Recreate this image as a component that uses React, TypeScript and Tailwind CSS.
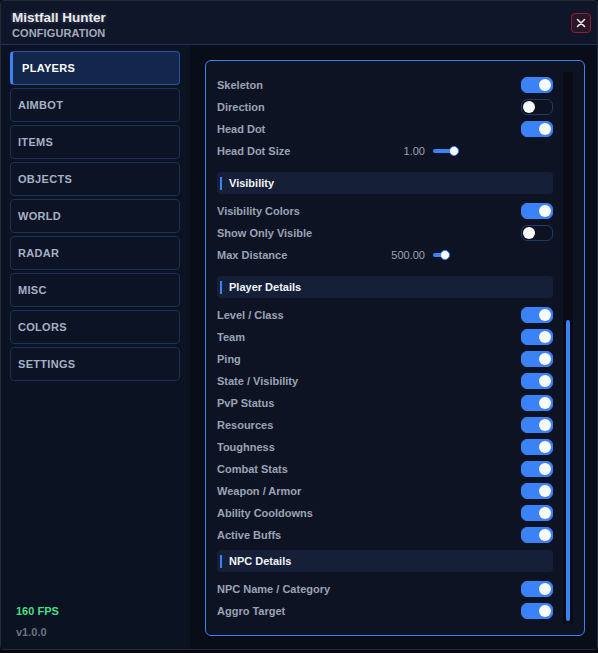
import { useLayoutEffect, useRef, useState } from "react";
import type { ReactNode } from "react";

type Row =
  | { kind: "toggle"; label: string; on: boolean }
  | { kind: "slider"; label: string; value: number; min: number; max: number };

type Section = { title: string; rows: Row[] };

const t = (label: string, on = true): Row => ({ kind: "toggle", label, on });
const s = (label: string, value: number, min: number, max: number): Row => ({ kind: "slider", label, value, min, max });

const tabs = ["PLAYERS", "AIMBOT", "ITEMS", "OBJECTS", "WORLD", "RADAR", "MISC", "COLORS", "SETTINGS"];

const sections: Section[] = [
  {
    title: "ESP",
    rows: [
      t("Enabled"), t("Box"), t("Corner Box", false), t("Filled Box", false), t("Name"),
      t("Distance"), t("Health Bar"), t("Health Text", false), t("Weapon"),
      s("Box Thickness", 1.5, 1, 5),
    ],
  },
  {
    title: "Overlay",
    rows: [
      t("Snaplines", false), t("Snaplines From Top", false), t("Off-Screen Arrows"), t("Glow", false), t("Outline"),
      s("Arrow Size", 12, 4, 32),
      t("Chams", false), t("Skeleton"), t("Direction", false), t("Head Dot"),
      s("Head Dot Size", 1, 0.5, 4),
    ],
  },
  {
    title: "Visibility",
    rows: [t("Visibility Colors"), t("Show Only Visible", false), s("Max Distance", 500, 0, 8000)],
  },
  {
    title: "Player Details",
    rows: [
      t("Level / Class"), t("Team"), t("Ping"), t("State / Visibility"), t("PvP Status"), t("Resources"),
      t("Toughness"), t("Combat Stats"), t("Weapon / Armor"), t("Ability Cooldowns"), t("Active Buffs"),
    ],
  },
  { title: "NPC Details", rows: [t("NPC Name / Category"), t("Aggro Target")] },
];

function Toggle({ initial }: { initial: boolean }) {
  const [on, setOn] = useState(initial);
  return (
    <button
      onClick={() => setOn(!on)}
      className={
        "flex h-[16px] w-[32px] items-center rounded-[6px] border px-px " +
        (on ? "justify-end border-[#3b82f6] bg-[#3b82f6]" : "justify-start border-[#1f3b6b] bg-[#0c1221]")
      }
    >
      <span className="block h-[12px] w-[12px] rounded-full bg-[#f8fafc]" />
    </button>
  );
}

function Slider({ value, min, max }: { value: number; min: number; max: number }) {
  const pct = (value - min) / (max - min);
  const knob = 5 + pct * 110;
  return (
    <div className="relative h-[4px] w-[120px]">
      <div className="absolute left-0 top-0 h-[4px] rounded-full bg-[#3b82f6]" style={{ width: knob }} />
      <div
        className="absolute top-[-3px] h-[10px] w-[10px] rounded-full border border-[#3b82f6] bg-white"
        style={{ left: knob - 5 }}
      />
    </div>
  );
}

function SettingRow({ row }: { row: Row }) {
  if (row.kind === "toggle") {
    return (
      <div className="flex h-[22px] items-center justify-between">
        <span className="text-[11px] font-bold text-[#9aa3b5]">{row.label}</span>
        <Toggle initial={row.on} />
      </div>
    );
  }
  return (
    <div className="mb-[6px] flex h-[22px] items-center">
      <span className="flex-1 text-[11px] font-bold text-[#9aa3b5]">{row.label}</span>
      <span className="mr-[8px] text-[11px] text-[#9ca3af]">{row.value.toFixed(2)}</span>
      <Slider value={row.value} min={row.min} max={row.max} />
    </div>
  );
}

function ScrollArea({ children }: { children: ReactNode }) {
  const ref = useRef<HTMLDivElement>(null);
  const [thumb, setThumb] = useState({ top: 0, size: 1 });

  const sync = () => {
    const el = ref.current;
    if (!el) return;
    setThumb({ top: el.scrollTop / el.scrollHeight, size: el.clientHeight / el.scrollHeight });
  };

  useLayoutEffect(() => {
    const el = ref.current;
    if (el) el.scrollTop = el.scrollHeight;
    sync();
  }, []);

  return (
    <div className="flex h-full min-h-0">
      <div
        ref={ref}
        onScroll={sync}
        className="min-w-0 flex-1 overflow-y-auto pr-[10px] [scrollbar-width:none] [&::-webkit-scrollbar]:hidden"
      >
        {children}
      </div>
      <div className="w-[10px] bg-[#090c14] p-[3px]">
        <div className="relative h-full">
          <div
            className="absolute inset-x-0 rounded-full bg-[#3b82f6]"
            style={{ top: `${thumb.top * 100}%`, height: `${thumb.size * 100}%` }}
          />
        </div>
      </div>
    </div>
  );
}

export default function App() {
  const [tab, setTab] = useState("PLAYERS");

  return (
    <div className="h-[653px] w-[598px] bg-[#06080e] font-['Liberation_Sans',Arial,sans-serif]">
      <div className="flex h-[650px] flex-col overflow-hidden rounded-[4px] border border-[#242b38] bg-[#0b101d]">
        {/* title bar */}
        <div className="flex h-[44px] shrink-0 items-center justify-between border-b border-[#1c3461] bg-[#10162a] pl-[11px] pr-[6px]">
          <div className="mt-[4px] flex flex-col">
            <span className="text-[13.5px] font-bold leading-[16px] text-[#e8eaf0] [text-shadow:0_0_4px_rgba(255,255,255,0.25)]">
              Mistfall Hunter
            </span>
            <span className="text-[11px] font-bold leading-[14px] tracking-[0.1px] text-[#a3abb9]">
              CONFIGURATION
            </span>
          </div>
          <button className="flex h-[20px] w-[20px] items-center justify-center rounded-[4px] border border-[#8b2232] bg-[#2a1627]">
            <svg width="10" height="10" viewBox="0 0 10 10" fill="none" stroke="#f1f1f1" strokeWidth="1.6" strokeLinecap="round">
              <path d="M1.5 1.5l7 7M8.5 1.5l-7 7" />
            </svg>
          </button>
        </div>

        <div className="flex min-h-0 flex-1">
          {/* sidebar */}
          <div className="flex w-[189px] shrink-0 flex-col bg-[#0b1222] pl-[9px] pr-[10px] pt-[6px]">
            <div className="flex flex-col gap-[3px]">
              {tabs.map((name) => {
                const active = name === tab;
                return (
                  <button
                    key={name}
                    onClick={() => setTab(name)}
                    className={
                      "flex h-[34px] items-center rounded-[4px] border pt-px text-left text-[11px] font-bold tracking-[0.3px] " +
                      (active
                        ? "border-[#28529a] border-l-[3px] border-l-[#3b82f6] bg-[#13264b] pl-[9px] text-white"
                        : "border-[#1a3059] bg-[#0c1325] pl-[7px] text-[#a6b0c3]")
                    }
                  >
                    {name}
                  </button>
                );
              })}
            </div>
            <div className="mt-auto flex flex-col gap-[7px] pb-[10px] pl-[6px]">
              <span className="text-[11px] font-bold leading-[14px] text-[#4ade80]">160 FPS</span>
              <span className="text-[11px] font-bold leading-[14px] text-[#6b7280]">v1.0.0</span>
            </div>
          </div>

          {/* settings panel */}
          <div className="flex min-w-0 flex-1 bg-[#090d17] pb-[13px] pl-[15px] pr-[12px] pt-[15px]">
            <div className="min-h-0 flex-1 rounded-[6px] border border-[#3b82f6] bg-[#0e1324] p-[11px]">
              <ScrollArea>
                <div className="flex flex-col pb-[2px]">
                  {sections.map((sec) => (
                    <div key={sec.title} className="flex flex-col">
                      <div className="mb-[6px] mt-[4px] flex h-[22px] items-center rounded-[4px] bg-[#151f38] pl-[3px]">
                        <span className="h-[13px] w-[2px] bg-[#3b82f6]" />
                        <span className="ml-[7px] text-[11px] font-bold text-[#f1f5f9]">{sec.title}</span>
                      </div>
                      {sec.rows.map((row) => (
                        <SettingRow key={row.label} row={row} />
                      ))}
                    </div>
                  ))}
                </div>
              </ScrollArea>
            </div>
          </div>
        </div>
      </div>
    </div>
  );
}
